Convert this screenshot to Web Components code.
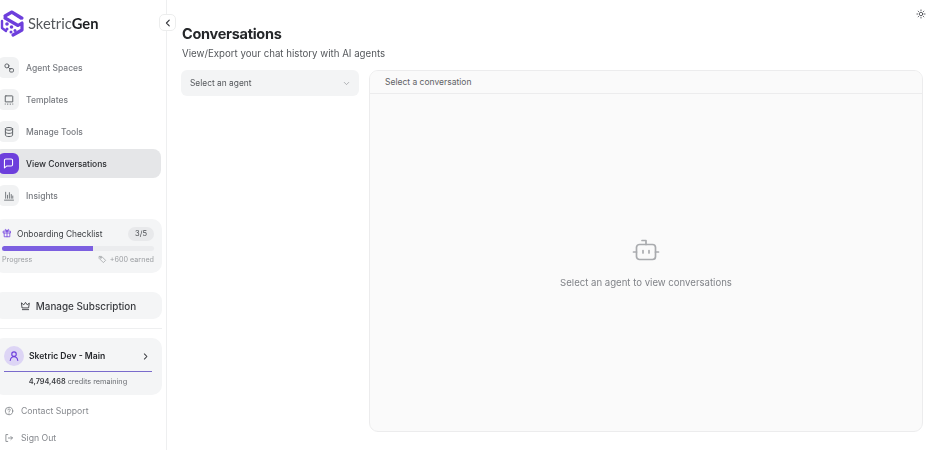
<!DOCTYPE html>
<html><head><meta charset="utf-8"><style>
html,body{margin:0;padding:0;height:100%;background:#fff;overflow:hidden}
body{font-family:Inter,"Liberation Sans",sans-serif;color:#1f2124}
</style></head><body>
<app-shell>
  <app-sidebar slot="side"></app-sidebar>
  <conv-page slot="main"></conv-page>
</app-shell>
<script>
const I={
 spaces:'<circle cx="5.200" cy="5.200" r="2.700"/><rect x="8.800" y="8.800" width="5.200" height="4.600" rx="1.600"/><path d="M7.200 7.200l2 2"/>',
 tpl:'<path d="M3.800 2.500h8.400a.8.800 0 0 1 .8.800v7.200H3V3.300a.8.800 0 0 1 .8-.8z"/><path d="M3 13.300v.2M6 13.500h.5M9.500 13.500h.5M13 13.300v.2"/>',
 db:'<ellipse cx="8" cy="3.800" rx="4.800" ry="1.900"/><path d="M3.200 3.800v8.400c0 1 2.200 1.900 4.800 1.900s4.800-.9 4.800-1.900V3.800"/><path d="M3.200 8c0 1 2.200 1.900 4.800 1.900s4.800-.9 4.800-1.900"/>',
 chat:'<path d="M3 4.200A1.700 1.700 0 0 1 4.700 2.500h6.600A1.700 1.700 0 0 1 13 4.200v5.100A1.700 1.700 0 0 1 11.300 11H6l-3 2.500z"/>',
 bars:'<path d="M2 13.500h12M3.500 3v8M6 7v4M8.500 3.500v7.500M11 6v5M13 8v3" stroke-width="1.100"/>'
};
function svg(p,s,c,w){return `<svg width="${s}" height="${s}" viewBox="0 0 16 16" fill="none" stroke="${c}" stroke-width="${w||1.3}" stroke-linecap="round" stroke-linejoin="round">${p}</svg>`}
function def(n,css,html){customElements.define(n,class extends HTMLElement{connectedCallback(){if(this.shadowRoot)return;const r=this.attachShadow({mode:'open'});r.innerHTML=`<style>${css}</style>`+(typeof html==='function'?html(this):html);}})}

def('app-shell',`:host{display:flex;height:450px;width:931px;overflow:hidden;filter:blur(.35px)}`,`<slot name="side"></slot><slot name="main"></slot>`);

def('nav-item',`
:host{display:flex;align-items:center;gap:7px;height:29px;margin:0 5px 3px -6px;padding-left:4px;border-radius:8px;font-size:8.500px;font-weight:500;color:#787b80}
:host([active]){background:#e5e6e8;color:#2a2c30}
.i{width:21px;height:21px;border-radius:6px;background:#f1f2f3;display:flex;align-items:center;justify-content:center;flex:none}
:host([active]) .i{background:#6d3fdc}
`,h=>`<span class="i">${svg(I[h.getAttribute('icon')],h.hasAttribute('active')?13:12,h.hasAttribute('active')?'#fff':'#5f6368')}</span><span>${h.getAttribute('label')}</span>`);

def('onboard-card',`
:host{display:block;background:#f4f5f6;border-radius:10px;margin:0 4px 0 -6px;height:54px;padding:0 8px;box-sizing:border-box}
.t{display:flex;align-items:center;height:28px;padding-top:2px;box-sizing:border-box;font-size:8.400px;color:#3f4246}
.t svg{margin-right:5px;margin-top:-3px;flex:none}
.b{margin-left:auto;font-size:7.500px;background:#e8e9eb;border-radius:8px;padding:0 7px;height:14px;line-height:14px;color:#4a4d52}
.p{height:5px;border-radius:3px;background:#ebecee;overflow:hidden;margin-top:-1px}
.p i{display:block;height:100%;width:60%;background:#7c5fe0}
.f{display:flex;justify-content:space-between;align-items:center;margin-top:4px;font-size:7.200px;color:#9a9da1}
.f span{display:flex;align-items:center;gap:3px}
`,`<div class="t">${svg('<rect x="2.500" y="5" width="11" height="3"/><path d="M3.500 8v6h9V8M8 5v9M8 5C6 5 5 4 5 3s2-1.500 3 2c1-3.500 3-3 3-2s-1 2-3 2z"/>',10,'#7c4fe0',1.400)}Onboarding Checklist<span class="b">3/5</span></div><div class="p"><i></i></div><div class="f"><span>Progress</span><span>${svg('<path d="M2.500 2.500h4l7 7-4 4-7-7z"/><circle cx="5" cy="5" r=".8"/>',9,'#9a9da1')}+600 earned</span></div>`);

def('sub-button',`
:host{display:flex;align-items:center;justify-content:center;gap:5px;height:27px;background:#f4f5f6;border-radius:9px;margin:19px 4px 0 -6px;font-size:9.900px;font-weight:500;color:#3a3c40}
`,`${svg('<path d="M2.500 4.500l3 2.500L8 3.500l2.500 3.500 3-2.500-1 7h-9z"/><path d="M3.500 14h9"/>',11,'#3a3c40')}<span>Manage Subscription</span>`);

def('user-card',`
:host{display:block;background:#f4f5f6;border-radius:10px;margin:0 4px 0 -6px;height:57px;padding:0 10px;box-sizing:border-box}
.r{display:flex;align-items:center;height:33px;padding-top:3px;box-sizing:border-box;font-size:8.600px;font-weight:600;color:#26282c}
.a{width:20px;height:20px;border-radius:50%;background:#ddd5f5;display:flex;align-items:center;justify-content:center;margin-right:5px}
.c{margin-left:auto;margin-right:2px;display:flex}
hr{border:0;border-top:1px solid #6d5cc8;margin:0;opacity:.9}
.m{text-align:center;font-size:7.300px;color:#6a6d72;margin-top:5px}
b{font-weight:600;color:#3a3c40}
`,`<div class="r"><span class="a">${svg('<circle cx="8" cy="5.500" r="3"/><path d="M3 14c.5-3 2.500-5 5-5s4.500 2 5 5"/>',12,'#6d3fdc',1.500)}</span>Sketric Dev - Main<span class="c">${svg('<path d="M6 3.500L10.500 8 6 12.500"/>',9,'#33353a',1.800)}</span></div><hr><div class="m"><b>4,794,468</b> credits remaining</div>`);

def('foot-link',`
:host{display:flex;align-items:center;gap:7px;font-size:8.700px;color:#85888d;height:27px}
`,h=>`${svg(h.getAttribute('icon')=='help'?'<circle cx="8" cy="8" r="6"/><path d="M6.300 6.300a1.800 1.800 0 1 1 2.600 1.700c-.6.300-.9.700-.9 1.300M8 11.500v.1"/>':'<path d="M6 2.500H3v11h3M7 8h6.500M11 5.500L13.500 8 11 10.500"/>',10,'#7d8085')}<span>${h.getAttribute('label')}</span>`);

def('app-sidebar',`
:host{display:block;width:167px;height:450px;flex:none;border-right:1px solid #eeeff0;box-sizing:border-box;overflow:hidden;padding-top:7px}
.logo{display:flex;align-items:center;height:31px;margin:0 0 15px -1px;font-family:Lato,sans-serif;font-size:14.700px;color:#55585c;gap:3px}
.logo b{color:#1d1f22;font-weight:700}
nav{display:flex;flex-direction:column}
hr{border:0;border-top:1px solid #eeeff0;margin:9px 4px 9px 0}
.ft{margin-top:2px;padding-left:4px}
.sp{height:6px}
`,`<div class="logo"><svg width="26" height="30" viewBox="0 0 26 30" fill="none" stroke="#6d3fdc" stroke-width="3.200" stroke-linecap="round" stroke-linejoin="round"><path d="M23 10L13 4 6 8"/><path d="M6 10l13 7.500 4-2.500v7l-9 5"/><path d="M12 4.500L22 11" stroke-width="1.500"/><path d="M3 13v7l4 3" stroke-width="2.400"/><g fill="#6d3fdc" stroke="none"><circle cx="8" cy="16" r="1.800"/><circle cx="12.500" cy="19" r="1.800"/><circle cx="8" cy="21" r="1.500"/><circle cx="12" cy="24" r="1.500"/><circle cx="16" cy="22.500" r="1.500"/></g></svg><span>Sketric<b>Gen</b></span></div>
<nav>
<nav-item icon="spaces" label="Agent Spaces"></nav-item>
<nav-item icon="tpl" label="Templates"></nav-item>
<nav-item icon="db" label="Manage Tools"></nav-item>
<nav-item icon="chat" label="View Conversations" active></nav-item>
<nav-item icon="bars" label="Insights"></nav-item>
</nav>
<div class="sp"></div>
<onboard-card></onboard-card>
<sub-button></sub-button>
<hr>
<user-card></user-card>
<div class="ft"><foot-link icon="help" label="Contact Support"></foot-link><foot-link icon="out" label="Sign Out"></foot-link></div>`);

def('collapse-btn',`
:host{position:absolute;left:-8px;top:14px;width:17px;height:17px;box-sizing:border-box;background:#fff;border:1px solid #eceded;border-radius:5px;display:flex;align-items:center;justify-content:center}
`,svg('<path d="M10 3.500L5.500 8l4.500 4.500"/>',10,'#33353a',1.800));

def('agent-select',`
:host{display:flex;align-items:center;justify-content:space-between;width:178px;height:26px;flex:none;margin-left:-1px;box-sizing:border-box;padding:0 8px 0 9px;background:#f3f4f5;border-radius:6px;font-size:8.400px;color:#55585c}
`,`<span>Select an agent</span>${svg('<path d="M4 6l4 4 4-4"/>',9,'#8f9296',1.200)}`);

def('conv-panel',`
:host{display:flex;flex-direction:column;flex:1;height:362px;box-sizing:border-box;background:#fafafa;border:1px solid #ececed;border-radius:9px;overflow:hidden}
.h{height:23px;flex:none;box-sizing:border-box;padding:0 15px;display:flex;align-items:center;font-size:8.500px;color:#5f6266;border-bottom:1px solid #ececed;background:#fafafa}
.e{flex:1;display:flex;flex-direction:column;align-items:center;padding-top:144px;gap:15px;font-size:9.600px;color:#808388;box-sizing:border-box}
svg{display:block}
`,`<div class="h">Select a conversation</div><div class="e"><svg width="28" height="24" viewBox="0 0 28 24" fill="none" stroke="#a9abae" stroke-width="1.700" stroke-linecap="round" stroke-linejoin="round"><rect x="4.500" y="6.500" width="19" height="15" rx="3"/><path d="M14 6.500V2.500h-4M1.500 14h3M23.500 14h3M11 12.500v2.500M17 12.500v2.500"/></svg><span>Select an agent to view conversations</span></div>`);

def('conv-page',`
:host{display:block;flex:1;position:relative;height:450px;box-sizing:border-box;padding:24px 8px 0 15px;min-width:0}
h1{margin:0;font-size:14.500px;line-height:19px;font-weight:700;color:#25272a;letter-spacing:-.28px}
p{margin:4px 0 9px;font-size:9.700px;line-height:14px;color:#55585c}
.row{display:flex;gap:10px;align-items:flex-start}
.sun{position:absolute;right:5px;top:9px;display:flex}
`,`<collapse-btn></collapse-btn><span class="sun">${svg('<circle cx="8" cy="8" r="2.800"/><path d="M8 1.500v1.200M8 13.300v1.200M1.500 8h1.200M13.300 8h1.200M3.400 3.400l.8.8M11.800 11.800l.8.8M3.400 12.600l.8-.8M11.800 4.200l.8-.8"/>',10,'#4a4d52',1.400)}</span><h1>Conversations</h1><p>View/Export your chat history with AI agents</p><div class="row"><agent-select></agent-select><conv-panel></conv-panel></div>`);
</script>
</body></html>
